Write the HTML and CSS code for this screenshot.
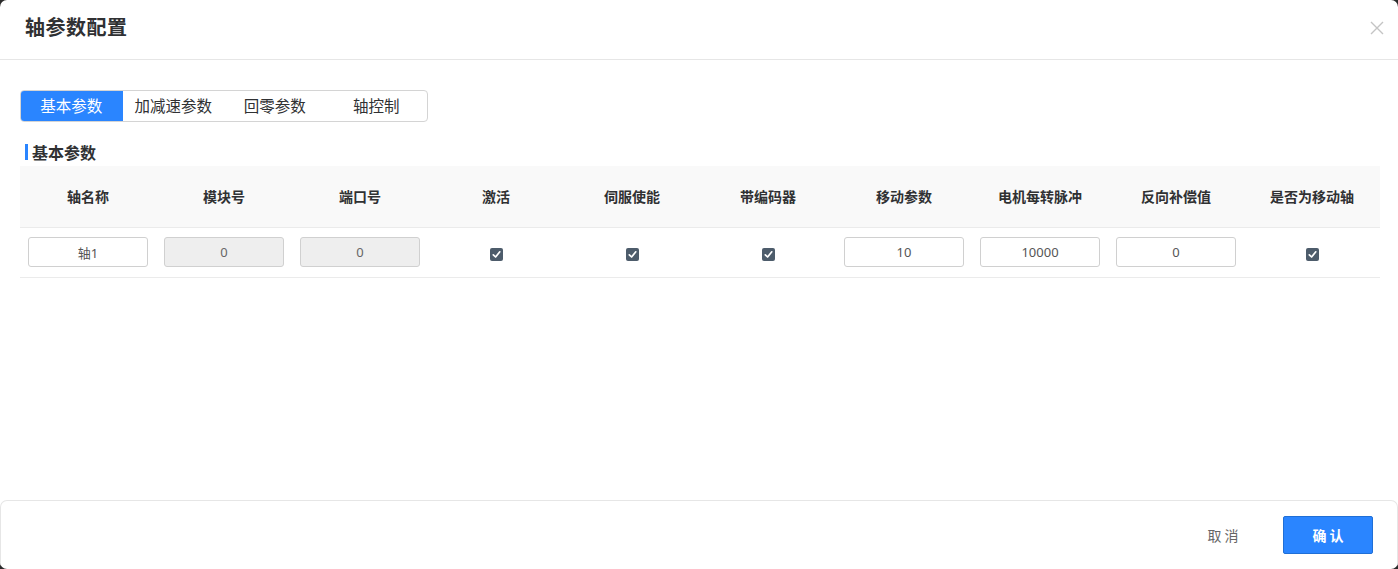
FILE: index.html
```html
<!DOCTYPE html>
<html lang="zh">
<head>
<meta charset="utf-8">
<title>轴参数配置</title>
<link rel="stylesheet" href="styles.css">
</head>
<body>
<div class="modal">
  <div class="modal-header">
    <h1 class="modal-title">轴参数配置</h1>
    <button class="close-btn" aria-label="关闭">
      <svg width="14" height="14" viewBox="0 0 14 14"><path d="M1 1 L13 13 M13 1 L1 13" stroke="#c4c4c4" stroke-width="1.4" fill="none"/></svg>
    </button>
  </div>
  <div class="modal-body">
    <div class="tabs">
      <div class="tab active">基本参数</div>
      <div class="tab">加减速参数</div>
      <div class="tab">回零参数</div>
      <div class="tab">轴控制</div>
    </div>
    <div class="section-title">基本参数</div>
    <table class="grid">
      <thead>
        <tr>
          <th>轴名称</th><th>模块号</th><th>端口号</th><th>激活</th><th>伺服使能</th>
          <th>带编码器</th><th>移动参数</th><th>电机每转脉冲</th><th>反向补偿值</th><th>是否为移动轴</th>
        </tr>
      </thead>
      <tbody>
        <tr>
          <td><input class="cell-input" value="轴1"></td>
          <td><input class="cell-input disabled" value="0" disabled></td>
          <td><input class="cell-input disabled" value="0" disabled></td>
          <td><span class="check"><svg width="9" height="9" viewBox="0 0 9 9"><path d="M1.3 4.8 L3.6 7 L7.8 1.8" stroke="#fff" stroke-width="1.7" fill="none" stroke-linecap="round" stroke-linejoin="round"/></svg></span></td>
          <td><span class="check"><svg width="9" height="9" viewBox="0 0 9 9"><path d="M1.3 4.8 L3.6 7 L7.8 1.8" stroke="#fff" stroke-width="1.7" fill="none" stroke-linecap="round" stroke-linejoin="round"/></svg></span></td>
          <td><span class="check"><svg width="9" height="9" viewBox="0 0 9 9"><path d="M1.3 4.8 L3.6 7 L7.8 1.8" stroke="#fff" stroke-width="1.7" fill="none" stroke-linecap="round" stroke-linejoin="round"/></svg></span></td>
          <td><input class="cell-input" value="10"></td>
          <td><input class="cell-input" value="10000"></td>
          <td><input class="cell-input" value="0"></td>
          <td><span class="check"><svg width="9" height="9" viewBox="0 0 9 9"><path d="M1.3 4.8 L3.6 7 L7.8 1.8" stroke="#fff" stroke-width="1.7" fill="none" stroke-linecap="round" stroke-linejoin="round"/></svg></span></td>
        </tr>
      </tbody>
    </table>
  </div>
  <div class="modal-footer">
    <button class="btn btn-text">取 消</button>
    <button class="btn btn-primary">确 认</button>
  </div>
</div>
</body>
</html>
```
FILE: styles.css
```css
* { box-sizing: border-box; }
html, body { margin: 0; padding: 0; height: 100%; }
body {
  background: #2b2b2b;
  font-family: "Noto Sans CJK SC", "Noto Sans", sans-serif;
  color: #303133;
}
.modal {
  height: 569px;
  width: 1398px;
  background: #fff;
  border-radius: 7px;
  display: flex;
  flex-direction: column;
  overflow: hidden;
}
.modal-header {
  height: 60px;
  border-bottom: 1px solid #e6e6e6;
  display: flex;
  align-items: center;
  justify-content: space-between;
  padding: 0 14px 6px 25px;
}
.modal-title {
  margin: 0;
  font-size: 20px;
  font-weight: 700;
  color: #303133;
  letter-spacing: 0.5px;
}
.close-btn {
  border: 0;
  background: none;
  padding: 0;
  width: 14px;
  height: 14px;
  display: flex;
  margin-top: 2px;
}
.modal-body {
  flex: 1;
  padding: 30px 20px 0 20px;
}
.tabs {
  display: grid;
  grid-template-columns: repeat(4, 1fr);
  width: 408px;
  height: 32px;
  border: 1px solid #d4d4d4;
  border-radius: 4px;
  overflow: hidden;
}
.tab {
  display: flex;
  align-items: center;
  justify-content: center;
  font-size: 15.5px;
  color: #303133;
  line-height: 1;
}
.tab.active {
  background: #2a85ff;
  color: #fff;
  margin: -1px 0 -1px -1px;
}
.section-title {
  margin-top: 22px;
  margin-left: 5px;
  border-left: 3px solid #2a85ff;
  padding-left: 4px;
  font-size: 16px;
  font-weight: 700;
  line-height: 16px;
  height: 16px;
  color: #303133;
}
.grid {
  margin-top: 6px;
  width: 1360px;
  border-collapse: collapse;
  table-layout: fixed;
}
.grid th {
  background: #f9f9f9;
  height: 61px;
  font-size: 14px;
  font-weight: 700;
  color: #303133;
  border-bottom: 1px solid #ebebeb;
  padding: 0 0 1px 0;
}
.grid td {
  height: 50px;
  text-align: center;
  border-bottom: 1px solid #ebebeb;
  padding: 0;
}
.cell-input {
  width: 120px;
  height: 30px;
  border: 1px solid #d0d0d0;
  border-radius: 3px;
  text-align: center;
  font-family: "Noto Sans", "Noto Sans CJK SC", sans-serif;
  font-size: 13px;
  color: #555;
  background: #fff;
  outline: none;
  padding: 0;
  display: block;
  margin: 0 auto;
}
.cell-input.disabled {
  background: #eeeeee;
  color: #666;
}
.check {
  display: inline-flex;
  width: 13px;
  height: 13px;
  background: #4d5c6b;
  border-radius: 2px;
  align-items: center;
  justify-content: center;
  vertical-align: middle;
}
.modal-footer {
  height: 69px;
  border: 1px solid #e6e6e6;
  border-bottom: 0;
  border-radius: 7px 7px 0 0;
  display: flex;
  align-items: center;
  justify-content: flex-end;
  gap: 27px;
  padding: 0 24px 0 0;
}
.btn {
  font-family: "Noto Sans CJK SC", sans-serif;
  font-size: 14px;
  height: 38px;
  cursor: pointer;
}
.btn-text {
  background: none;
  border: 0;
  color: #666;
  padding: 0 10px;
  width: 66px;
}
.btn-primary {
  background: #2a85ff;
  border: 1px solid #1f6fd6;
  border-radius: 2px;
  color: #fff;
  font-weight: 700;
  width: 90px;
}
```
